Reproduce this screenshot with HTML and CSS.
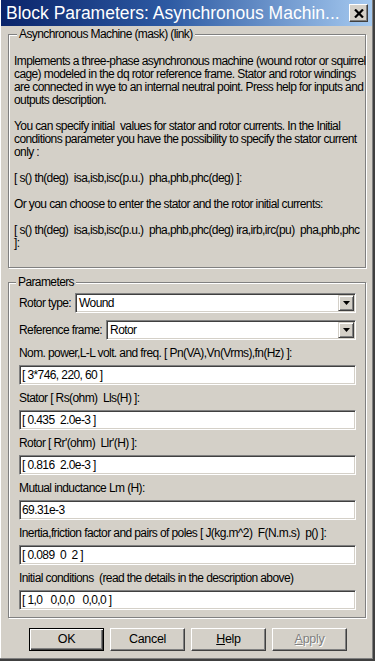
FILE: index.html
```html
<!DOCTYPE html>
<html>
<head>
<meta charset="utf-8">
<title>Block Parameters</title>
<link rel="stylesheet" href="styles.css">
</head>
<body>
<div class="window">
  <div class="titlebar">
    <span class="title">Block Parameters: Asynchronous Machin...</span>
    <span class="close-btn">
      <svg width="10" height="9" viewBox="0 0 10 9"><path d="M1 0.5 L9 8.5 M9 0.5 L1 8.5" stroke="#000" stroke-width="2.2" fill="none"/></svg>
    </span>
  </div>
  <div class="content">
    <fieldset class="group group-desc">
      <legend class="legend-desc">Asynchronous Machine (mask) (link)</legend>
      <div class="desc-text"><div class="line">Implements a three-phase asynchronous machine (wound rotor or squirrel</div><div class="line">cage) modeled in the dq rotor reference frame. Stator and rotor windings</div><div class="line">are connected in wye to an internal neutral point. Press help for inputs and</div><div class="line">outputs description.</div><div class="line"> </div><div class="line">You can specify initial  values for stator and rotor currents. In the Initial</div><div class="line">conditions parameter you have the possibility to specify the stator current</div><div class="line">only :</div><div class="line"> </div><div class="line">[ s() th(deg)  isa,isb,isc(p.u.)  pha,phb,phc(deg) ]:</div><div class="line"> </div><div class="line">Or you can choose to enter the stator and the rotor initial currents:</div><div class="line"> </div><div class="line">[ s() th(deg)  isa,isb,isc(p.u.)  pha,phb,phc(deg) ira,irb,irc(pu)  pha,phb,phc</div><div class="line">]:</div></div>
    </fieldset>
    <fieldset class="group group-params">
      <legend class="legend-params">Parameters</legend>
      <div class="select-row">
        <span class="select-label">Rotor type:</span>
        <div class="select"><span class="select-value">Wound</span><span class="drop-btn"><svg width="7" height="4" viewBox="0 0 7 4"><path d="M0 0 H7 L3.5 4 Z" fill="#000"/></svg></span></div>
      </div>
      <div class="select-row second">
        <span class="select-label">Reference frame:</span>
        <div class="select"><span class="select-value">Rotor</span><span class="drop-btn"><svg width="7" height="4" viewBox="0 0 7 4"><path d="M0 0 H7 L3.5 4 Z" fill="#000"/></svg></span></div>
      </div>
      <div class="param-label">Nom. power,L-L volt. and freq. [ Pn(VA),Vn(Vrms),fn(Hz) ]:</div>
      <div class="edit">[ 3*746, 220, 60 ]</div>
      <div class="param-label">Stator [ Rs(ohm)  Lls(H) ]:</div>
      <div class="edit">[ 0.435  2.0e-3 ]</div>
      <div class="param-label">Rotor [ Rr'(ohm)  Llr'(H) ]:</div>
      <div class="edit">[ 0.816  2.0e-3 ]</div>
      <div class="param-label">Mutual inductance Lm (H):</div>
      <div class="edit">69.31e-3</div>
      <div class="param-label">Inertia,friction factor and pairs of poles [ J(kg.m^2)  F(N.m.s)  p() ]:</div>
      <div class="edit">[ 0.089  0  2 ]</div>
      <div class="param-label">Initial conditions  (read the details in the description above)</div>
      <div class="edit">[ 1,0   0,0,0   0,0,0 ]</div>
    </fieldset>
    <div class="buttons">
      <div class="btn btn-default"><span class="btn-inner">OK</span></div>
      <div class="btn"><span class="btn-inner">Cancel</span></div>
      <div class="btn"><span class="btn-inner"><u>H</u>elp</span></div>
      <div class="btn btn-disabled"><span class="btn-inner"><u>A</u>pply</span></div>
    </div>
  </div>
</div>
</body>
</html>
```
FILE: styles.css
```css
html, body {
  margin: 0;
  padding: 0;
}
body {
  width: 375px;
  height: 661px;
  overflow: hidden;
  background: #d4d0c8;
  font-family: "Liberation Sans", Arial, sans-serif;
  font-size: 12px;
  letter-spacing: -0.6px;
  color: #000;
}
.window {
  width: 375px;
  height: 661px;
  box-sizing: border-box;
  background: #d4d0c8;
  box-shadow: inset -2px -2px #404040, inset -3px -3px #808080, inset 1px 1px #ffffff;
  display: flex;
  flex-direction: column;
}
.titlebar {
  height: 26px;
  margin: 0 3px 0 1px;
  background: linear-gradient(to right, #0a246a 0%, #2d5aa3 45%, #a6caf0 100%);
  display: flex;
  align-items: center;
  justify-content: space-between;
  padding: 0 4px 0 5px;
}
.title {
  color: #fff;
  font-family: "Liberation Sans", Arial, sans-serif;
  font-size: 17.5px;
  letter-spacing: 0;
  white-space: nowrap;
  line-height: 20px;
}
.close-btn {
  width: 19px;
  height: 18px;
  box-sizing: border-box;
  background: #d4d0c8;
  border: 1px solid;
  border-color: #ffffff #404040 #404040 #ffffff;
  box-shadow: inset -1px -1px #808080;
  display: flex;
  align-items: center;
  justify-content: center;
}
.close-btn svg { display: block; }
.content {
  padding: 2px 9px 0 8px;
  display: flex;
  flex-direction: column;
}
.group {
  margin: 0;
  min-width: 0;
  border: 1px solid #808080;
  box-shadow: inset 1px 1px #ffffff, 1px 1px #ffffff;
}
.group legend {
  background: #d4d0c8;
  line-height: 13px;
  padding: 0 2px;
  white-space: nowrap;
}
.group-desc {
  padding: 14px 4px 17px 5px;
}
.legend-desc {
  margin-left: 3px;
}
.desc-text .line {
  height: 13px;
  line-height: 13px;
  white-space: pre;
}
.group-params {
  margin-top: 8px;
  padding: 4px 9px 7px 10px;
}
.legend-params {
  margin-left: -3px;
}
.select-row {
  display: flex;
  align-items: center;
  height: 20px;
  gap: 4px;
}
.select-row.second {
  margin-top: 7px;
}
.select-label {
  white-space: nowrap;
  line-height: 13px;
}
.select {
  flex: 1;
  height: 20px;
  box-sizing: border-box;
  background: #fff;
  border: 1px solid;
  border-color: #808080 #ffffff #ffffff #808080;
  box-shadow: inset 1px 1px #404040, inset -1px -1px #d4d0c8;
  display: flex;
  align-items: center;
  padding: 1px 1px 1px 3px;
}
.select-value {
  flex: 1;
  line-height: 16px;
}
.drop-btn {
  width: 16px;
  height: 16px;
  box-sizing: border-box;
  background: #d4d0c8;
  border: 1px solid;
  border-color: #d4d0c8 #404040 #404040 #d4d0c8;
  box-shadow: inset 1px 1px #ffffff, inset -1px -1px #808080;
  display: flex;
  align-items: center;
  justify-content: center;
}
.drop-btn svg { display: block; }
.param-label {
  margin-top: 7px;
  line-height: 13px;
  height: 13px;
  white-space: pre;
}
.edit {
  margin-top: 5px;
  height: 20px;
  box-sizing: border-box;
  background: #fff;
  border: 1px solid;
  border-color: #808080 #ffffff #ffffff #808080;
  box-shadow: inset 1px 1px #404040, inset -1px -1px #d4d0c8;
  padding: 0 0 0 2px;
  line-height: 18px;
  white-space: pre;
}
.buttons {
  display: flex;
  gap: 6px;
  margin-top: 10px;
  padding-left: 21px;
}
.btn {
  width: 75px;
  height: 23px;
  box-sizing: border-box;
  border: 1px solid;
  border-color: #ffffff #404040 #404040 #ffffff;
  box-shadow: inset -1px -1px #808080;
  display: flex;
  align-items: center;
  justify-content: center;
}
.btn-default {
  border: 1px solid #000;
  box-shadow: inset 1px 1px #ffffff, inset -1px -1px #404040, inset -2px -2px #808080;
}
.btn-inner {
  line-height: 13px;
  font-size: 12.5px;
  letter-spacing: -0.3px;
}
.btn-disabled .btn-inner {
  color: #808080;
  text-shadow: 1px 1px #ffffff;
}
```
